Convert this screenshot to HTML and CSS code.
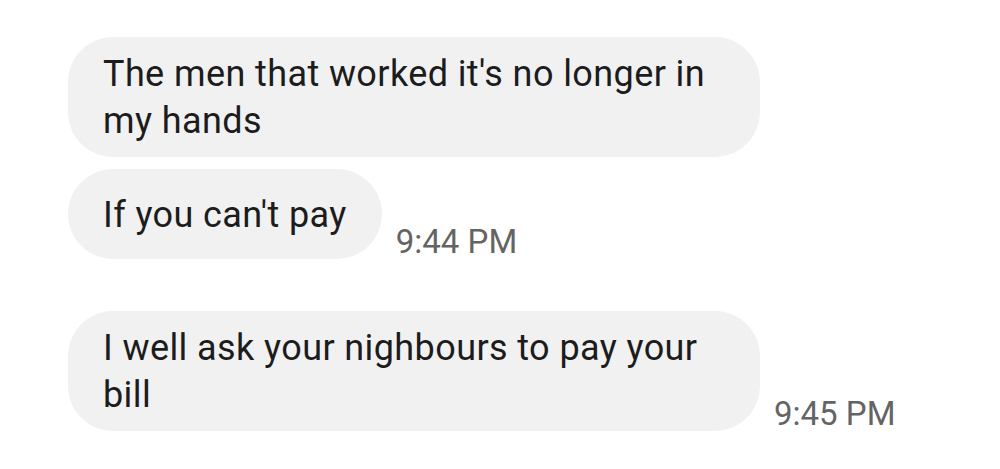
FILE: index.html
```html
<!DOCTYPE html>
<html lang="en">
<head>
  <meta charset="UTF-8">
  <title>Messages</title>
  <link rel="stylesheet" href="styles.css">
</head>
<body>

  <div class="thread">
    <div class="row">
      <div class="bubble">The men that worked it's no longer in my hands</div>
    </div>

    <div class="row">
      <div class="bubble">If you can't pay</div>
      <span class="time">9:44 PM</span>
    </div>

    <div class="row group-start">
      <div class="bubble">I well ask your nighbours to pay your bill</div>
      <span class="time">9:45 PM</span>
    </div>
  </div>

</body>
</html>
```

FILE: styles.css
```css
* {
  box-sizing: border-box;
  margin: 0;
  padding: 0;
}

body {
  background: #fff;
  font-family: Roboto, 'Noto Sans', sans-serif;
  color: #1c1c1c;
}

.thread {
  padding: 37px 0 0 68px;
  display: flex;
  flex-direction: column;
  gap: 12px;
}

.row {
  display: flex;
  align-items: flex-end;
  gap: 14px;
}

.row.group-start {
  margin-top: 40px;
}

.bubble {
  display: flex;
  align-items: center;
  min-height: 90px;
  max-width: 692px;
  padding: 14px 35px 12px;
  background: #f1f1f2;
  border-radius: 45px;
  font-size: 36px;
  line-height: 47px;
  letter-spacing: 0.4px;
}

.time {
  font-size: 33px;
  line-height: 1;
  color: #646464;
  margin-bottom: 1px;
  white-space: nowrap;
}
```
